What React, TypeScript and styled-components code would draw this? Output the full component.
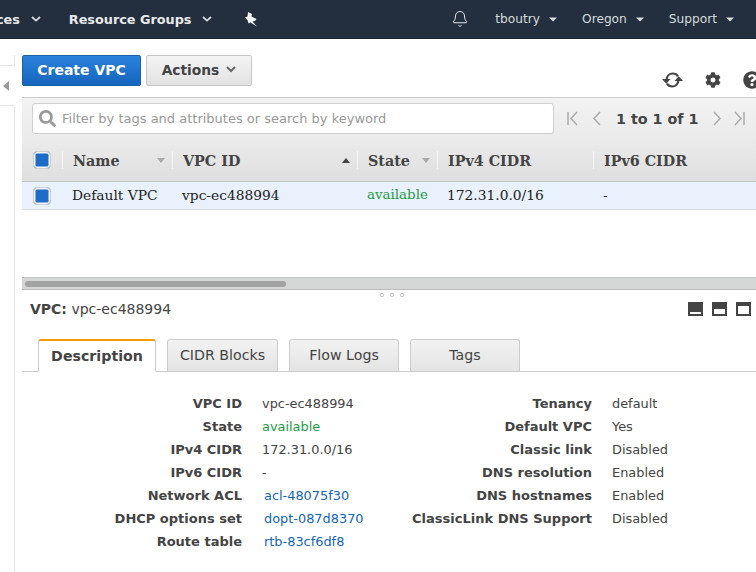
import styled, { createGlobalStyle } from 'styled-components';
import { Bell } from 'lucide-react';
import { FaCog, FaQuestionCircle, FaSearch } from 'react-icons/fa';

const GlobalStyle = createGlobalStyle`
	html, body {
		margin: 0;
		padding: 0;
		background: #ffffff;
		overflow: hidden;
	}
	body {
		width: 756px;
		height: 572px;
		font-family: 'DejaVu Sans', sans-serif;
		color: #444444;
	}
`;

const columns = [
	{ label: 'Name', width: 110, sort: 'down' },
	{ label: 'VPC ID', width: 185, sort: 'up' },
	{ label: 'State', width: 80, sort: 'down' },
	{ label: 'IPv4 CIDR', width: 156 },
	{ label: 'IPv6 CIDR', width: 160 },
];

const leftDetails = [
	{ label: 'VPC ID', value: 'vpc-ec488994' },
	{ label: 'State', value: 'available', tone: 'ok' },
	{ label: 'IPv4 CIDR', value: '172.31.0.0/16' },
	{ label: 'IPv6 CIDR', value: '-' },
	{ label: 'Network ACL', value: 'acl-48075f30', tone: 'link' },
	{ label: 'DHCP options set', value: 'dopt-087d8370', tone: 'link' },
	{ label: 'Route table', value: 'rtb-83cf6df8', tone: 'link' },
];

const rightDetails = [
	{ label: 'Tenancy', value: 'default' },
	{ label: 'Default VPC', value: 'Yes' },
	{ label: 'Classic link', value: 'Disabled' },
	{ label: 'DNS resolution', value: 'Enabled' },
	{ label: 'DNS hostnames', value: 'Enabled' },
	{ label: 'ClassicLink DNS Support', value: 'Disabled' },
];

function Chevron() {
	return (
		<svg width="10" height="6" viewBox="0 0 10 6" fill="none">
			<path d="M1 1l4 3.6L9 1" stroke="#d5dbdb" strokeWidth="1.8" />
		</svg>
	);
}

function Caret() {
	return (
		<svg width="8" height="5" viewBox="0 0 8 5">
			<path d="M0 .5h8L4 4.5z" fill="#d5dbdb" />
		</svg>
	);
}

function PinIcon() {
	return (
		<svg width="14" height="15" viewBox="0 0 14 15">
			<path
				d="M4 0L8 2L7.500 4.500L12.500 7L11 9L8.500 9.500L13 14.500L6.500 10.500L4.500 11.500L3.500 8L1 5.500L3.500 4.500z"
				fill="#f2f3f3"
			/>
		</svg>
	);
}

function RefreshIcon() {
	return (
		<svg width="21" height="18" viewBox="0 0 21 18" fill="none">
			<path d="M4.500 9C4.800 5 7.500 2.500 10.800 2.500c2.300 0 4 1 5.200 2.800" stroke="#444" strokeWidth="2.200" />
			<path d="M16.500 9c-.3 4-3 6.500-6.300 6.500-2.300 0-4-1-5.200-2.800" stroke="#444" strokeWidth="2.200" />
			<path d="M0 8h8.500L4.300 12.800zM12.500 10H21L16.700 5.200z" fill="#444" />
		</svg>
	);
}

function PagerIcon({ kind }: { kind: 'first' | 'prev' | 'next' | 'last' }) {
	const paths = {
		first: 'M2 2v13M11 2L5 8.500l6 6.500',
		prev: 'M9 2L3 8.500l6 6.500',
		next: 'M3 2l6 6.500-6 6.500',
		last: 'M2 2l6 6.500-6 6.500M11 2v13',
	};
	const width = kind === 'next' ? 10 : 13;
	return (
		<svg width={width} height="17" viewBox={`0 0 ${width} 17`} fill="none">
			<path d={paths[kind]} stroke="#aaaaaa" strokeWidth="1.500" />
		</svg>
	);
}

function PaneIcon({ kind }: { kind: 'bottom' | 'middle' | 'top' }) {
	const y = kind === 'bottom' ? 10 : kind === 'middle' ? 7 : 4;
	const h = kind === 'bottom' ? 2 : kind === 'middle' ? 5 : 8;
	return (
		<svg width="15" height="14" viewBox="0 0 15 14">
			<rect width="15" height="14" fill="#444444" />
			<rect x="2" y={y} width="11" height={h} fill="#ffffff" />
		</svg>
	);
}

export default function App() {
	return (
		<>
			<GlobalStyle />
			<Page>
				<TopNav>
					<NavLeft>
						<NavMenu $clipped>
							Services <Chevron />
						</NavMenu>
						<NavMenu>
							Resource Groups <Chevron />
						</NavMenu>
						<PinSlot>
							<PinIcon />
						</PinSlot>
					</NavLeft>
					<NavRight>
						<BellSlot>
							<Bell size={18} strokeWidth={1.3} color="#e8eaea" />
						</BellSlot>
						<NavUser>
							tboutry <Caret />
						</NavUser>
						<NavUser>
							Oregon <Caret />
						</NavUser>
						<NavUser>
							Support <Caret />
						</NavUser>
					</NavRight>
				</TopNav>
				<Body>
					<SideRail>
						<RailStub />
						<SideTab>
							<CollapseArrow />
						</SideTab>
						<RailRest />
					</SideRail>
					<Main>
						<Toolbar>
							<CreateButton>Create VPC</CreateButton>
							<ActionsButton>
								Actions
								<svg width="10" height="7" viewBox="0 0 10 7" fill="none">
									<path d="M1 1l4 4 4-4" stroke="#666" strokeWidth="2" />
								</svg>
							</ActionsButton>
							<ToolIcons>
								<RefreshIcon />
								<FaCog size={16} color="#444" />
								<FaQuestionCircle size={18} color="#444" />
							</ToolIcons>
						</Toolbar>
						<FilterBar>
							<FilterInput>
								<FaSearch size={17} color="#999" />
								<span>Filter by tags and attributes or search by keyword</span>
							</FilterInput>
							<Pager>
								<PagerIcon kind="first" />
								<PagerIcon kind="prev" />
								<PagerText>1 to 1 of 1</PagerText>
								<PagerIcon kind="next" />
								<PagerIcon kind="last" />
							</Pager>
						</FilterBar>
						<HeaderRow>
							<CheckCell>
								<CheckBox />
							</CheckCell>
							{columns.map((col) => (
								<HeaderCell key={col.label} $width={col.width}>
									{col.label}
									{col.sort && <SortMark $dir={col.sort} />}
								</HeaderCell>
							))}
						</HeaderRow>
						<DataRow>
							<CheckCell>
								<CheckBox />
							</CheckCell>
							<DataCell $width={110}>Default VPC</DataCell>
							<DataCell $width={185}>vpc-ec488994</DataCell>
							<DataCell $width={80} $ok>
								available
							</DataCell>
							<DataCell $width={156}>172.31.0.0/16</DataCell>
							<DataCell $width={160}>-</DataCell>
						</DataRow>
						<TableSpace />
						<ScrollTrack>
							<ScrollThumb />
						</ScrollTrack>
						<Grip>
							<i />
							<i />
							<i />
						</Grip>
						<DetailHead>
							<DetailTitle>
								<b>VPC:</b> vpc-ec488994
							</DetailTitle>
							<PaneIcons>
								<PaneIcon kind="bottom" />
								<PaneIcon kind="middle" />
								<PaneIcon kind="top" />
							</PaneIcons>
						</DetailHead>
						<Tabs>
							<Tab $active $width={118}>
								Description
							</Tab>
							<Tab $width={111}>CIDR Blocks</Tab>
							<Tab $width={110}>Flow Logs</Tab>
							<Tab $width={110}>Tags</Tab>
						</Tabs>
						<DetailGrid>
							<DetailColumn $labelWidth={220}>
								{leftDetails.map((item) => (
									<DetailRow key={item.label}>
										<DetailLabel>{item.label}</DetailLabel>
										<DetailValue $tone={item.tone}>{item.value}</DetailValue>
									</DetailRow>
								))}
							</DetailColumn>
							<DetailColumn $labelWidth={220}>
								{rightDetails.map((item) => (
									<DetailRow key={item.label}>
										<DetailLabel>{item.label}</DetailLabel>
										<DetailValue>{item.value}</DetailValue>
									</DetailRow>
								))}
							</DetailColumn>
						</DetailGrid>
					</Main>
				</Body>
			</Page>
		</>
	);
}

const Page = styled.div`
	width: 756px;
	height: 572px;
	overflow: hidden;
	display: flex;
	flex-direction: column;
`;

const TopNav = styled.header`
	height: 39px;
	box-sizing: border-box;
	flex-shrink: 0;
	display: flex;
	justify-content: space-between;
	align-items: center;
	background: #232f3e;
	border-bottom: 1px solid #1a2330;
	color: #e8eaea;
`;

const NavLeft = styled.div`
	display: flex;
	align-items: center;
	gap: 28px;
`;

const NavMenu = styled.div<{ $clipped?: boolean }>`
	display: flex;
	align-items: center;
	gap: 11px;
	margin-left: ${(p) => (p.$clipped ? '-41px' : '0')};
	font-size: 12.800px;
	font-weight: 700;
	white-space: nowrap;
`;

const PinSlot = styled.span`
	display: flex;
	margin-left: 4px;
`;

const NavRight = styled.div`
	display: flex;
	align-items: center;
	gap: 25px;
	padding-right: 22px;
`;

const BellSlot = styled.span`
	display: flex;
	margin-right: 1px;
`;

const NavUser = styled.div`
	display: flex;
	align-items: center;
	gap: 9px;
	font-size: 12.200px;
	color: #d5dbdb;
`;

const Body = styled.div`
	flex: 1;
	display: flex;
	min-height: 0;
`;

const SideRail = styled.aside`
	width: 15px;
	flex-shrink: 0;
	margin-right: 7px;
	padding-top: 16px;
	box-sizing: border-box;
	display: flex;
	flex-direction: column;
`;

const RailStub = styled.div`
	height: 10px;
	border-right: 1px solid #e6e6e6;
`;

const SideTab = styled.div`
	height: 39px;
	display: flex;
	align-items: center;
	padding-left: 3px;
	border-top: 1px solid #e6e6e6;
	border-bottom: 1px solid #e6e6e6;
`;

const RailRest = styled.div`
	flex: 1;
	border-right: 1px solid #e6e6e6;
`;

const CollapseArrow = styled.span`
	width: 0;
	height: 0;
	border-top: 5.500px solid transparent;
	border-bottom: 5.500px solid transparent;
	border-right: 6px solid #999999;
`;

const Main = styled.main`
	width: 734px;
	flex-shrink: 0;
`;

const Toolbar = styled.div`
	height: 58px;
	display: flex;
	align-items: flex-start;
	gap: 5px;
	padding-top: 16px;
	box-sizing: border-box;
`;

const CreateButton = styled.button`
	width: 119px;
	height: 31px;
	padding: 0 0 2px;
	border: 1px solid #1a5fa8;
	border-radius: 2px;
	background: linear-gradient(#2a82dc, #1565bd);
	color: #ffffff;
	font-family: inherit;
	font-size: 14px;
	font-weight: 700;
`;

const ActionsButton = styled.button`
	width: 106px;
	height: 31px;
	padding: 0 0 2px;
	display: flex;
	align-items: center;
	justify-content: center;
	gap: 7px;
	border: 1px solid #c6c6c6;
	border-radius: 2px;
	background: linear-gradient(#f4f4f4, #e2e2e2);
	color: #444444;
	font-family: inherit;
	font-size: 13.800px;
	font-weight: 700;
`;

const ToolIcons = styled.div`
	margin-left: auto;
	margin-right: -5px;
	padding-top: 16px;
	display: flex;
	align-items: center;
	gap: 22px;
`;

const FilterBar = styled.div`
	height: 42px;
	box-sizing: border-box;
	display: flex;
	align-items: center;
	gap: 12px;
	padding: 0 10px;
	border-top: 1px solid #cccccc;
	background: linear-gradient(#f2f2f2, #ebebeb);
`;

const FilterInput = styled.div`
	width: 522px;
	height: 31px;
	box-sizing: border-box;
	flex-shrink: 0;
	display: flex;
	align-items: center;
	gap: 6px;
	padding-left: 6px;
	background: #ffffff;
	border: 1px solid #d0d0d0;
	border-radius: 3px;
	font-size: 13px;
	color: #999999;
	white-space: nowrap;
`;

const Pager = styled.div`
	display: flex;
	align-items: center;
	gap: 12px;
`;

const PagerText = styled.span`
	margin-right: 1px;
	font-size: 14.300px;
	font-weight: 700;
	color: #444444;
	white-space: nowrap;
`;

const HeaderRow = styled.div`
	height: 43px;
	box-sizing: border-box;
	display: flex;
	align-items: center;
	border-bottom: 1px solid #c4c4c4;
	background: linear-gradient(#ebebeb, #dfdfdf);
`;

const CheckCell = styled.div`
	width: 40px;
	flex-shrink: 0;
	display: flex;
	justify-content: center;
`;

const CheckBox = styled.span`
	width: 18px;
	height: 18px;
	box-sizing: border-box;
	display: block;
	border: 1px solid #cfcfcf;
	border-radius: 4px;
	background: #1f6cc8;
	box-shadow: inset 0 0 0 1.500px #f4f4f4;
`;

const HeaderCell = styled.div<{ $width: number }>`
	position: relative;
	width: ${(p) => p.$width}px;
	height: 18px;
	flex-shrink: 0;
	box-sizing: border-box;
	padding-left: 10px;
	border-left: 1px solid #f6f6f6;
	font-family: 'DejaVu Serif', serif;
	font-size: 14.300px;
	font-weight: 700;
	line-height: 20px;
	color: #444444;
`;

const SortMark = styled.span<{ $dir: string }>`
	position: absolute;
	right: 7px;
	top: 7px;
	width: 0;
	height: 0;
	border-left: 4px solid transparent;
	border-right: 4px solid transparent;
	${(p) => (p.$dir === 'up' ? 'border-bottom: 5px solid #444444;' : 'border-top: 5px solid #aaaaaa;')}
`;

const DataRow = styled.div`
	height: 28px;
	box-sizing: border-box;
	display: flex;
	align-items: center;
	background: #e9f1fc;
	border-bottom: 1px solid #d5dbe3;
`;

const DataCell = styled.div<{ $width: number; $ok?: boolean }>`
	width: ${(p) => p.$width}px;
	flex-shrink: 0;
	padding: 0 0 2px 10px;
	box-sizing: border-box;
	font-family: 'DejaVu Serif', serif;
	font-size: ${(p) => (p.$ok ? '13.400px' : '13.800px')};
	color: ${(p) => (p.$ok ? '#1d9a45' : '#222222')};
`;

const TableSpace = styled.div`
	height: 67px;
`;

const ScrollTrack = styled.div`
	height: 13px;
	box-sizing: border-box;
	padding: 3px 3px;
	background: #d4d6d5;
	border-top: 1px solid #c4c4c4;
	border-bottom: 1px solid #bbbbbb;
`;

const ScrollThumb = styled.div`
	width: 261px;
	height: 6px;
	border-radius: 3px;
	background: #a3a3a3;
`;

const Grip = styled.div`
	height: 7px;
	display: flex;
	justify-content: center;
	gap: 6px;
	padding: 3px 0 0 6px;
	box-sizing: border-box;

	i {
		width: 4px;
		height: 4px;
		box-sizing: border-box;
		border: 1px solid #cccccc;
		border-radius: 1px;
	}
`;

const DetailHead = styled.div`
	height: 24px;
	display: flex;
	align-items: center;
	justify-content: space-between;
	padding: 0 5px 0 8px;
`;

const DetailTitle = styled.div`
	font-size: 14px;
	color: #444444;
`;

const PaneIcons = styled.div`
	display: flex;
	gap: 9px;
`;

const Tabs = styled.div`
	height: 33px;
	box-sizing: border-box;
	margin-top: 18px;
	padding-left: 16px;
	display: flex;
	gap: 11px;
	border-bottom: 1px solid #cccccc;
`;

const Tab = styled.div<{ $active?: boolean; $width: number }>`
	width: ${(p) => p.$width}px;
	height: ${(p) => (p.$active ? '33px' : '32px')};
	box-sizing: border-box;
	display: flex;
	align-items: center;
	justify-content: center;
	padding-bottom: ${(p) => (p.$active ? '0' : '2px')};
	border: 1px solid #cccccc;
	border-bottom: ${(p) => (p.$active ? '1px solid #ffffff' : '0')};
	border-top: ${(p) => (p.$active ? '2px solid #f59b00' : '1px solid #cccccc')};
	border-radius: 3px 3px 0 0;
	background: ${(p) => (p.$active ? '#ffffff' : 'linear-gradient(#f2f2f2, #e4e4e4)')};
	font-size: 14.200px;
	font-weight: ${(p) => (p.$active ? 700 : 400)};
	color: #444444;
`;

const DetailGrid = styled.div`
	display: grid;
	grid-template-columns: 350px 350px;
	padding-top: 24px;
`;

const DetailColumn = styled.div<{ $labelWidth: number }>`
	display: grid;
	grid-template-columns: ${(p) => p.$labelWidth}px auto;
	grid-auto-rows: 23px;
`;

const DetailRow = styled.div`
	display: contents;
`;

const DetailLabel = styled.div`
	font-size: 13px;
	font-weight: 700;
	color: #444444;
	text-align: right;
	white-space: nowrap;
`;

const DetailValue = styled.div<{ $tone?: string }>`
	padding-left: ${(p) => (p.$tone === 'link' ? '22px' : '20px')};
	font-size: 12.900px;
	color: ${(p) => (p.$tone === 'ok' ? '#1d9a45' : p.$tone === 'link' ? '#1166bb' : '#444444')};
	white-space: nowrap;
`;
